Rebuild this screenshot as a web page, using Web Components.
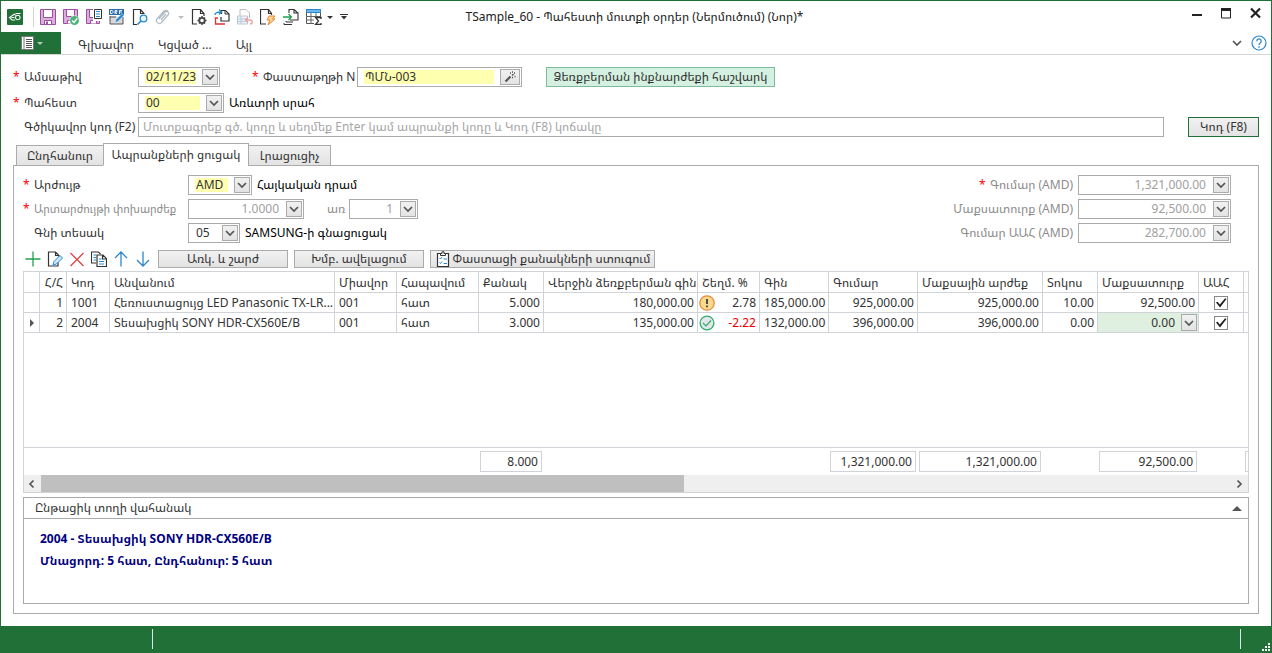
<!DOCTYPE html>
<html lang="hy">
<head>
<meta charset="utf-8">
<title>TSample_60</title>
<style>
:root{--green:#217038;--line:#ababab;--grid:#d0d4d8;--ink:#333;--muted:#8c8c8c;--face:linear-gradient(#f1f1f1,#e3e3e3);
--ui:"Noto Sans","Noto Sans Armenian","DejaVu Sans Condensed","DejaVu Sans",sans-serif}
body{margin:0;font:12px/20px var(--ui);color:var(--ink);background:#fff}
</style>
</head>
<body>
<app-window></app-window>
<script>
const ICONS = {
 logo:'<rect width="16" height="16" rx="1" fill="#217038"/><path d="M7.500 5 2.500 8.500l2.500 2.500h3M4.500 8.500h3M7.500 5l1 1.500M8.500 8.500a2.300 2.300 0 1 0 4.600 0a2.300 2.300 0 1 0-4.600 0M8.500 4.500h5" fill="none" stroke="#fff" stroke-width="1.100"/>',
 save:'<path d="M.5.5h15v15H.5z" fill="#dcaede" stroke="#9c4f9f"/><path d="M3.500.5h9v8h-9z" fill="#fff" stroke="#9c4f9f"/><path d="M4.500 11.500h7v4h-7z" fill="#fff" stroke="#9c4f9f"/><path d="M6 12.500h2V15H6z" fill="#9c4f9f"/>',
 saveok:'<path d="M.5.5h14v14H.5z" fill="#dcaede" stroke="#9c4f9f"/><path d="M3.500.5h8v7h-8zM4.500 14.500v-3h4v3" fill="#fff" stroke="#9c4f9f"/><circle cx="11.500" cy="11.500" r="5" fill="#fff"/><circle cx="11.500" cy="11.500" r="4.500" fill="#4db479"/><path d="m9 11.500 2 2 3.200-4" fill="none" stroke="#fff" stroke-width="1.500"/>',
 savedoc:'<path d="M.5.5h13v14H.5z" fill="#dcaede" stroke="#9c4f9f"/><path d="M3.500.5h5v8h-5zM4.500 14.500v-3h6v3" fill="#fff" stroke="#9c4f9f"/><path d="M7 0h9v12H7z" fill="#fff"/><path d="M8.500.5h7v9h-7z" fill="#fff" stroke="#333"/><path d="M10 2.500h4M10 5h4M10 7.500h4" stroke="#2b88cc" stroke-width="1.200"/>',
 drf:'<path d="M1 7v8h13V8M1 8h6" fill="#d8d8d8" stroke="#555"/><path d="M0 0h15v6H0z" fill="#2b6cb0"/><path d="M1.500 1.500v3h1.700l.8-.8V2.300l-.8-.8zM6 5V1.500h2V3H6l2 2M10.500 5V1.500H13M10.500 3H13" fill="none" stroke="#fff" stroke-width=".9"/><path d="m6 14 1-3.500 6-6 2 2-6 6z" fill="#2b88cc" stroke="#fff" stroke-width=".5"/>',
 find:'<path d="M5 15.500H1.500V.5h7l3.500 4V5M8.500.5v4H12" fill="none" stroke="#333" stroke-width="1.200"/><circle cx="11.500" cy="9.500" r="3.300" fill="#e8f4fd" stroke="#2b88cc" stroke-width="1.300"/><path d="m9 12-3.500 3.500" stroke="#2b88cc" stroke-width="1.600"/>',
 clip:'<path d="m4 10 6-7a2 2 0 0 1 3 0c1 1 1 2 0 3l-7 8a3 3 0 0 1-4-1c-1-1-1-2 0-3l7-8a3.500 3.500 0 0 1 4 0M6 11l5-6" fill="none" stroke="#b0bcc4" stroke-width="1.200"/>',
 gear:'<path d="M6 15H1.500V.5h8l3.500 4V7M9.500.5v4H13" fill="none" stroke="#333" stroke-width="1.200"/><circle cx="11" cy="11.500" r="2.700" fill="none" stroke="#444" stroke-width="1.800"/><path d="M11 7v1.500M11 14.500V16M6.500 11.500H8M14 11.500h1.500M8 8.500l1 1M13 13.500l1 1M14 8.500l-1 1M9 13.500l-1 1" stroke="#444" stroke-width="1.500"/>',
 swap:'<path d="M7.500 5V1.500h4L15 5v7H7V8" fill="none" stroke="#333" stroke-width="1.200"/><path d="M11 1.500V5h4" fill="none" stroke="#333"/><path d="M1 6c0-2 2-3 6-3M5 .5 7.500 3 5 5.500" fill="none" stroke="#2b88cc" stroke-width="1.300"/><path d="M4 9H1.500v6H11" fill="none" stroke="#d33" stroke-width="1.300"/>',
 undo:'<path d="M3 7V.5h6L12.500 4v5" fill="none" stroke="#bbb"/><path d="M.5 7h10v8H.5zM.5 10h9M.5 12.500h8M4 7v8" fill="#eef4fa" stroke="#b8c8d8"/><path d="M9 11h4c3 0 3 4 0 4M11 8.500 8.500 11l2.500 2.500" fill="none" stroke="#eaa3a3" stroke-width="1.400"/>',
 bolt:'<path d="M6 15H.5V.5h8l3 4V6M8.500.5v4h3" fill="none" stroke="#333" stroke-width="1.200"/><path d="m9 7h6l-2.500 3H15l-7 6 2-5H7z" fill="#fcd79a" stroke="#e8862a"/>',
 push:'<path d="M6 4V.5h5L15 4v7H7M11 .5V4h4" fill="none" stroke="#333" stroke-width="1.100"/><path d="M0 8h8M5.500 5 8.500 8l-3 3" fill="none" stroke="#22a04f" stroke-width="1.300"/><path d="M3 12v1h7M1 14v1.500h8" fill="none" stroke="#333"/>',
 sum:'<path d="M.5.5h14v14H.5z" fill="#fff" stroke="#555"/><path d="M.5.5h14v3H.5z" fill="#6db6e8" stroke="#2b88cc"/><path d="M0 7.500h15M0 11h8M5 4v11M10 4v4" stroke="#666"/><path d="M8 8h8v8H8z" fill="#fff"/><path d="M15 10V8.500H9.500L12.500 12l-3 3.500H15V14" fill="none" stroke="#333" stroke-width="1.300"/>',
 menu:'<path d="M.5 1.500h12v13H.5z" fill="#fff" stroke="#777"/><path d="M3 1v14" stroke="#777"/><path d="M5 4.500h6M5 6.500h6M5 8.500h6M5 10.500h6M5 12.500h6" stroke="#555"/>',
 caret:'<path d="M0 7h6l-3 3z" fill="currentColor"/>',
 caretbar:'<path d="M0 5.500h8" stroke="currentColor"/><path d="M1 7h6l-3 3.500z" fill="currentColor"/>',
 min:'<path d="M1 9h10" stroke="#222" stroke-width="2"/>',
 max:'<path d="M1.500 3v9h9V3z" fill="none" stroke="#222"/><path d="M1 2h10v3H1z" fill="#222"/>',
 close:'<path d="m2 2.500 9 9M11 2.500l-9 9" stroke="#222" stroke-width="2.200"/>',
 help:'<circle cx="8" cy="8" r="7" fill="#fff" stroke="#2b88cc" stroke-width="1.200"/><path d="M5.800 6.200a2.200 2.200 0 1 1 3.600 1.600c-.9.700-1.400 1-1.400 2.200M8 11.300v1.400" fill="none" stroke="#2b88cc" stroke-width="1.300"/>',
 chev:'<path d="m3 5 4 4 4-4" fill="none" stroke="#555" stroke-width="1.700"/>',
 wand:'<path d="m2.500 11.500 5-5" stroke="#555" stroke-width="2.200"/><path d="M9 5.500 10.500 4M7 3h1M11 3h1M9 2h1M11.500 6.500h1M9 7.500h1" stroke="#555" stroke-width="1.300"/>',
 add:'<path d="M8 .5v15M.5 8h15" stroke="#22a04f" stroke-width="1.300"/>',
 edit:'<path d="M11 11v4H1.500V1h7L12 4.500V6M8.500 1v3.500H12" fill="none" stroke="#333" stroke-width="1.200"/><path d="m6 14 1-3.500 6-6L15.500 7l-6 6z" fill="#cfe6f7" stroke="#2b88cc"/>',
 del:'<path d="m1.500 2 13 13M14.500 2l-13 13" stroke="#e5393c" stroke-width="1.200"/>',
 copy:'<path d="M5 12H.5V1h7l2 2" fill="none" stroke="#333" stroke-width="1.100"/><path d="M2.500 4H5M2.500 6.500H5M2.500 9H5" stroke="#2b88cc"/><path d="M6 4h6l3.500 3.500V15.500H6zM11.500 4v4h4" fill="#fff" stroke="#333" stroke-width="1.200"/><path d="M8 8h2.500M8 10.500h5M8 13h5" stroke="#2b88cc"/>',
 up:'<path d="M8 15.500V1M2 7l6-6 6 6" fill="none" stroke="#2b88cc" stroke-width="1.300"/>',
 down:'<path d="M8 .5V15M2 9l6 6 6-6" fill="none" stroke="#2b88cc" stroke-width="1.300"/>',
 list:'<path d="M2.500 2.500h11v13h-11z" fill="#fff" stroke="#333" stroke-width="1.200"/><path d="M5.500 4.500v-2h1.500V.8h2v1.700h1.500v2z" fill="#fff" stroke="#333"/><path d="m4.500 7 1 1 1.500-2M4.500 11.500l1 1 1.500-2" fill="none" stroke="#2b88cc"/><path d="M8.500 8h3.500M8.500 12.500h3.500" stroke="#2b88cc"/>',
 warn:'<circle cx="8" cy="8" r="7.200" fill="#f9d98d" stroke="#e68a3c" stroke-width="1.300"/><path d="M8 4v5M8 10.500v1.700" stroke="#333" stroke-width="1.700"/>',
 ok:'<circle cx="8" cy="8" r="6.900" fill="#e3e6ec" stroke="#2fae6b" stroke-width="1.300"/><path d="m4 8 3 3 5-5.500" fill="none" stroke="#2fae6b" stroke-width="1.200"/>',
 left:'<path d="M9.500 4.500 6 8l3.500 3.500" fill="none" stroke="#555" stroke-width="1.700"/>',
 right:'<path d="M6.500 4.500 10 8l-3.500 3.500" fill="none" stroke="#555" stroke-width="1.700"/>',
 grip:'<path d="M6 0h2v2H6zM3 3h2v2H3zM6 3h2v2H6zM0 6h2v2H0zM3 6h2v2H3zM6 6h2v2H6z" fill="#fff"/>'
};
const SIZES = {caret:[6,16],caretbar:[8,16],min:[12,16],max:[12,16],close:[13,16],menu:[13,16],chev:[14,14],wand:[14,14],grip:[8,8]};

class Base extends HTMLElement{
  constructor(){ super(); this.attachShadow({mode:'open'}); }
  connectedCallback(){ if(!this.shadowRoot.childNodes.length) this.shadowRoot.innerHTML =
    '<style>*{box-sizing:border-box}button,input,select{font:inherit;color:inherit}button{padding:0;cursor:pointer}'+this.css()+'</style>'+this.html(); }
  css(){return ''} html(){return '<slot></slot>'}
}
customElements.define('ui-icon', class extends Base{
  css(){return ':host{display:block;flex:none}svg{display:block}'}
  html(){const n=this.getAttribute('name'),[w,h]=SIZES[n]||[16,16];
    return `<svg width="${w}" height="${h}" viewBox="0 0 ${w} ${h}" aria-hidden="true">${ICONS[n]}</svg>`}
});

customElements.define('icon-button', class extends Base{
  css(){return ':host{display:block;flex:none}button{display:block;border:0;background:none}:host([dim]) button{color:#bbb}'}
  html(){return `<button type="button" aria-label="${this.getAttribute('name')}"><ui-icon name="${this.getAttribute('name')}"></ui-icon></button>`}
});

customElements.define('push-button', class extends Base{
  css(){return `:host{display:block;flex:none}
   button{display:flex;align-items:center;justify-content:center;gap:2px;width:100%;height:18px;line-height:16px;border:1px solid var(--line);background:var(--face);white-space:nowrap}
   :host([tall]) button{height:20px;line-height:18px}
   :host([tone=mint]) button{background:#d3f0e0;border-color:#7fba9d}
   :host([tone=main]) button{border-color:var(--green)}`}
  html(){return '<button type="button"><slot></slot></button>'}
});

/* Caption, boxed control and an optional trailing note. kind: select | number | text */
customElements.define('data-field', class extends Base{
  css(){return `:host{display:flex;align-items:center;height:20px;white-space:nowrap}
   label{display:flex;flex:none;width:var(--label,125px)}
   label::before{content:"";flex:none;width:11px;color:#f00}
   :host([required]) label::before{content:"*"}
   :host([end]) label{justify-content:flex-end;padding-right:5px}
   :host([muted]){color:var(--muted)}
   :host([small]) label span{font-size:11px}
   .box{display:flex;align-items:center;width:var(--box);height:20px;border:1px solid var(--line);background:#fff;padding:0 1px 0 6px;flex:none}
   input,select{flex:1;min-width:0;height:14px;line-height:14px;border:0;padding:0 0 0 1px;margin:0 6px 0 0;background:none;appearance:none;outline:0;border-radius:0}
   :host([hot]) :is(input,select){background:#ffffb0}
   :host([muted]) :is(input,select){color:#a0a0a0;text-align:right;margin-right:7px}
   :host([wide]) .box{flex:1;padding:0 3px}
   input::placeholder{color:#a6a6a6;opacity:1}
   .drop{width:16px;height:16px;border:1px solid var(--line);background:var(--face);flex:none;display:block}
   :host([icon]) .drop{width:20px}
   .drop ui-icon{margin:0 auto;width:14px}
   slot{display:block;margin-left:5px;color:#000}
   :host(:empty) slot{display:none}`}
  html(){const a=n=>this.getAttribute(n)||'',k=a('kind');
   const ctl=k==='select'?`<select id="c"><option>${a('value')}</option></select>`:`<input id="c" type="text" value="${a('value')}" placeholder="${a('placeholder')}">`;
   const drop=k==='select'?'<span class="drop"><ui-icon name="chev"></ui-icon></span>':k==='text'?'':`<button type="button" class="drop" aria-label="${a('label')}"><ui-icon name="${a('icon')||'chev'}"></ui-icon></button>`;
   return `<label for="c"><span>${a('label')}</span></label><div class="box">${ctl}${drop}</div><slot></slot>`}
});

customElements.define('title-bar', class extends Base{
  css(){return `:host{display:flex;height:31px;align-items:center}
   nav,.win{display:flex;flex:1;align-items:center}nav{gap:7px;padding-left:6px}
   hr{width:1px;height:20px;margin:0 -1px 0 3px;border:0;background:#d4d4d4}
   h1{font:inherit;margin:0;color:#222;white-space:nowrap}
   .win{justify-content:flex-end;gap:17px;padding:0 9px 6px 0}
   .tight{display:flex;gap:5px}`}
  html(){const b=n=>`<icon-button name="${n}"></icon-button>`;
   return `<nav aria-label="Quick access">${b('logo')}<hr>${['save','saveok','savedoc','drf','find','clip'].map(b).join('')}<icon-button name="caret" dim></icon-button>${['gear','swap','undo','bolt','push'].map(b).join('')}<span class="tight">${b('sum')}${b('caret')}</span>${b('caretbar')}</nav>
   <h1>TSample_60 - Պահեստի մուտքի օրդեր (Ներմուծում) (Նոր)*</h1>
   <div class="win">${b('min')}${b('max')}${b('close')}</div>`}
});

customElements.define('ribbon-bar', class extends Base{
  css(){return `:host{display:flex;height:23px;align-items:center;border-bottom:1px solid #d4d4d4}
   .file{display:flex;align-items:center;gap:3px;width:60px;height:22px;padding-left:20px;border:0;background:var(--green);color:#b5ccb9;flex:none}
   a{color:#333;text-decoration:none;margin-top:4px;margin-left:24px;white-space:nowrap}
   a:first-of-type{margin-left:17px}
   .end{margin-left:auto;display:flex;gap:7px;align-items:center;padding:0 4px 0 0}`}
  html(){return `<button class="file" type="button" aria-label="File"><ui-icon name="menu"></ui-icon><ui-icon name="caret"></ui-icon></button>
   <a href="#home">Գլխավոր</a><a href="#attached">Կցված ...</a><a href="#other">Այլ</a>
   <div class="end"><icon-button name="chev"></icon-button><icon-button name="help"></icon-button></div>`}
});

customElements.define('tab-strip', class extends Base{
  css(){return `:host{display:flex;align-items:flex-end;height:22px;margin:7px 0 -1px 3px;position:relative}
   button{height:21px;border:1px solid var(--line);background:var(--face);margin-right:-1px;white-space:nowrap;line-height:18px}
   button[aria-selected=true]{height:23px;background:#fff;border-bottom-color:#fff}
   button:nth-child(1){width:88px}button:nth-child(2){width:146px}button:nth-child(3){width:83px}
   div{display:flex;align-items:flex-end;height:23px}`}
  html(){return `<div role="tablist"><button role="tab">Ընդհանուր</button><button role="tab" aria-selected="true">Ապրանքների ցուցակ</button><button role="tab">Լրացուցիչ</button></div>`}
});

customElements.define('item-grid', class extends Base{
  css(){return `:host{display:block;border:1px solid var(--grid)}
   table{width:100%;table-layout:fixed;border-collapse:separate;border-spacing:0}
   th,td{height:20px;line-height:19px;padding:0 3px 0 4px;border:solid var(--grid);border-width:0 1px 1px 0;font-weight:400;text-align:left;white-space:nowrap;overflow:hidden}
   th{height:21px;padding-right:0}
   td.n{text-align:right}
   tbody td:nth-child(4){padding-right:0}
   tr>:last-child{border-right:0;padding:0}
   th:nth-child(2),td:nth-child(2){text-align:right;padding-right:3px}
   .fill td{height:115px}
   tfoot td{height:27px;padding:0 2px 0 1px;border:0;text-align:right}
   tfoot output{display:block;height:21px;border:1px solid var(--grid);padding-right:3px;line-height:20px}
   tfoot td:last-child{padding-left:1px}
   tfoot td:last-child output{width:8px}
   .mark::before{content:"";display:block;margin-left:2px;border:solid transparent;border-width:4px 0 4px 4px;border-left-color:#555;width:0}
   .dev{display:flex;align-items:center;justify-content:space-between}
   td.dv{padding-left:1px}
   .neg{color:#f00000}
   .edit{background:#dff0e0;padding:0 1px}
   .edit div{display:flex;align-items:center;height:19px}
   .edit input{flex:1;min-width:0;border:0;background:none;text-align:right;padding:0;margin-right:6px;height:18px}
   .edit button{width:16px;height:17px;border:1px solid var(--line);background:var(--face);flex:none}
   td.ck{padding:0}
   .ck input{appearance:none;display:block;width:14px;height:14px;margin:0 auto;border:1px solid #888;background:#fff}
   .ck input::before{content:"";display:block;width:12px;height:12px;background:#222;clip-path:polygon(8% 50%,22% 44%,40% 66%,84% 14%,96% 20%,42% 92%)}
   .bar{display:flex;height:17px;background:#efefef}
   .bar button{width:17px;border:0;background:none}
   .track{flex:1}.thumb{width:54%;height:17px;background:#bfbfbf}`}
  html(){
   const w=[16,27,43,0,62,82,65,154,62,69,89,125,55,101,45,4];
   const h=['','Հ/Հ','Կոդ','Անվանում','Միավոր','Հապավում','Քանակ','Վերջին ձեռքբերման գին','Շեղմ. %','Գին','Գումար','Մաքսային արժեք','Տոկոս','Մաքսատուրք','ԱԱՀ',''];
   const row=(mark,c,icon,neg,duty)=>`<tr><td class="${mark}"></td><td>${c[0]}</td><td>${c[1]}</td><td>${c[2]}</td><td>001</td><td>հատ</td><td class="n">${c[3]}</td><td class="n">${c[4]}</td><td class="dv"><div class="dev"><ui-icon name="${icon}"></ui-icon><span class="${neg}">${c[5]}</span></div></td>${c.slice(6).map(v=>`<td class="n">${v}</td>`).join('')}${duty}<td class="ck"><input type="checkbox" checked aria-label="ԱԱՀ"></td><td></td></tr>`;
   const foot={6:'8.000',10:'1,321,000.00',11:'1,321,000.00',13:'92,500.00',15:''};
   return `<table><colgroup>${w.map(x=>x?`<col style="width:${x}px">`:'<col>').join('')}</colgroup>
   <thead><tr>${h.map(t=>`<th scope="col">${t}</th>`).join('')}</tr></thead><tbody>
   ${row('',['1','1001','Հեռուստացույց LED Panasonic TX-LR...','5.000','180,000.00','2.78','185,000.00','925,000.00','925,000.00','10.00'],'warn','','<td class="n">92,500.00</td>')}
   ${row('mark',['2','2004','Տեսախցիկ SONY HDR-CX560E/B','3.000','135,000.00','-2.22','132,000.00','396,000.00','396,000.00','0.00'],'ok','neg','<td class="edit"><div><input type="text" value="0.00" aria-label="Մաքսատուրք"><button type="button" aria-label="Մաքսատուրք"><ui-icon name="chev"></ui-icon></button></div></td>')}
   <tr class="fill"><td colspan="16"></td></tr></tbody>
   <tfoot><tr>${w.map((_,i)=>`<td>${i in foot?`<output>${foot[i]}</output>`:''}</td>`).join('')}</tr></tfoot></table>
   <div class="bar"><button type="button" aria-label="Left"><ui-icon name="left"></ui-icon></button><div class="track"><div class="thumb"></div></div><button type="button" aria-label="Right"><ui-icon name="right"></ui-icon></button></div>`}
});

customElements.define('info-panel', class extends Base{
  css(){return `:host{display:block;border:1px solid var(--line);margin-top:4px}
   summary{display:flex;align-items:center;justify-content:space-between;height:21px;padding:0 6px 0 11px;border-bottom:1px solid var(--line);list-style:none}
   summary::after{content:"";border:solid transparent;border-width:0 5px 5px;border-bottom-color:#555}
   .body{height:84px;padding:9px 16px;color:#000080;font-weight:700;line-height:22px}
   ::slotted(p){margin:0}`}
  html(){return '<details open><summary>Ընթացիկ տողի վահանակ</summary><div class="body"><slot></slot></div></details>'}
});

customElements.define('status-bar', class extends Base{
  css(){return `:host{display:flex;height:27px;background:var(--green)}
   i{width:1px;height:20px;margin:3px 0 0 152px;background:#dbe8dd}i+i{margin-left:auto}
   ui-icon{margin:17px 2px 0 21px}`}
  html(){return '<i></i><i></i><ui-icon name="grip"></ui-icon>'}
});

customElements.define('app-window', class extends Base{
  css(){return `:host{display:flex;flex-direction:column;min-height:100vh;box-sizing:border-box;border-top:1px solid var(--green)}
   .frame{border:solid var(--green);border-width:0 1px;flex:1}
   main{padding:12px}
   .row{display:flex;align-items:center}
   .head{display:grid;row-gap:4px}
   .head .row:first-child{margin-bottom:2px}
   .page{border:1px solid var(--line);padding:9px}
   .top{display:flex;justify-content:space-between;padding-right:18px}
   .col{display:grid;gap:4px;--label:165px}
   .sums{--label:127px;--box:153px}
   .tools{display:flex;gap:6px;padding:7px 0 3px;align-items:center}
   .icons{display:flex;gap:6px;padding:0 1px 0 2px}
   .w130{width:130px}.w225{width:225px}`}
  html(){return `<div class="frame"><title-bar></title-bar><ribbon-bar></ribbon-bar><main>
   <div class="head">
    <div class="row"><data-field required hot kind="number" label="Ամսաթիվ" value="02/11/23" style="--box:82px"></data-field>
     <data-field required hot kind="number" icon="wand" label="Փաստաթղթի N" value="ՊՄՆ-003" style="--label:105px;--box:165px;margin-left:32px"></data-field>
     <push-button tall tone="mint" style="width:229px;margin-left:24px">Ձեռքբերման ինքնարժեքի հաշվարկ</push-button></div>
    <data-field required hot kind="select" label="Պահեստ" value="00" style="--box:86px">Առևտրի սրահ</data-field>
    <div class="row"><data-field wide kind="text" label="Գծիկավոր կոդ (F2)" placeholder="Մուտքագրեք գծ. կոդը և սեղմեք Enter կամ ապրանքի կոդը և Կոդ (F8) կոճակը" style="flex:1"></data-field>
     <push-button tall tone="main" style="width:71px;margin-left:24px">Կոդ (F8)</push-button></div>
   </div>
   <tab-strip></tab-strip>
   <section class="page">
    <div class="top"><div class="col">
      <data-field required hot kind="select" label="Արժույթ" value="AMD" style="--box:64px">Հայկական դրամ</data-field>
      <div class="row"><data-field required muted small kind="number" label="Արտարժույթի փոխարժեք" value="1.0000" style="--box:116px"></data-field>
       <data-field muted kind="number" label="առ" value="1" style="--label:33px;--box:69px;margin-left:12px"></data-field></div>
      <data-field kind="select" label="Գնի տեսակ" value="05" style="--box:52px">SAMSUNG-ի գնացուցակ</data-field>
     </div>
     <div class="col sums">
      <data-field end required muted kind="number" label="Գումար (AMD)" value="1,321,000.00"></data-field>
      <data-field end muted kind="number" label="Մաքսատուրք (AMD)" value="92,500.00"></data-field>
      <data-field end muted kind="number" label="Գումար ԱԱՀ (AMD)" value="282,700.00"></data-field>
     </div></div>
    <div class="tools"><div class="icons">${['add','edit','del','copy','up','down'].map(n=>`<icon-button name="${n}"></icon-button>`).join('')}</div>
     <push-button class="w130">Առկ. և շարժ</push-button><push-button class="w130">Խմբ. ավելացում</push-button>
     <push-button class="w225"><ui-icon name="list"></ui-icon>Փաստացի քանակների ստուգում</push-button></div>
    <item-grid></item-grid>
    <info-panel><p>2004 - Տեսախցիկ SONY HDR-CX560E/B</p><p>Մնացորդ: 5 հատ, Ընդհանուր: 5 հատ</p></info-panel>
   </section></main></div><status-bar></status-bar>`}
});
</script>
</body>
</html>
